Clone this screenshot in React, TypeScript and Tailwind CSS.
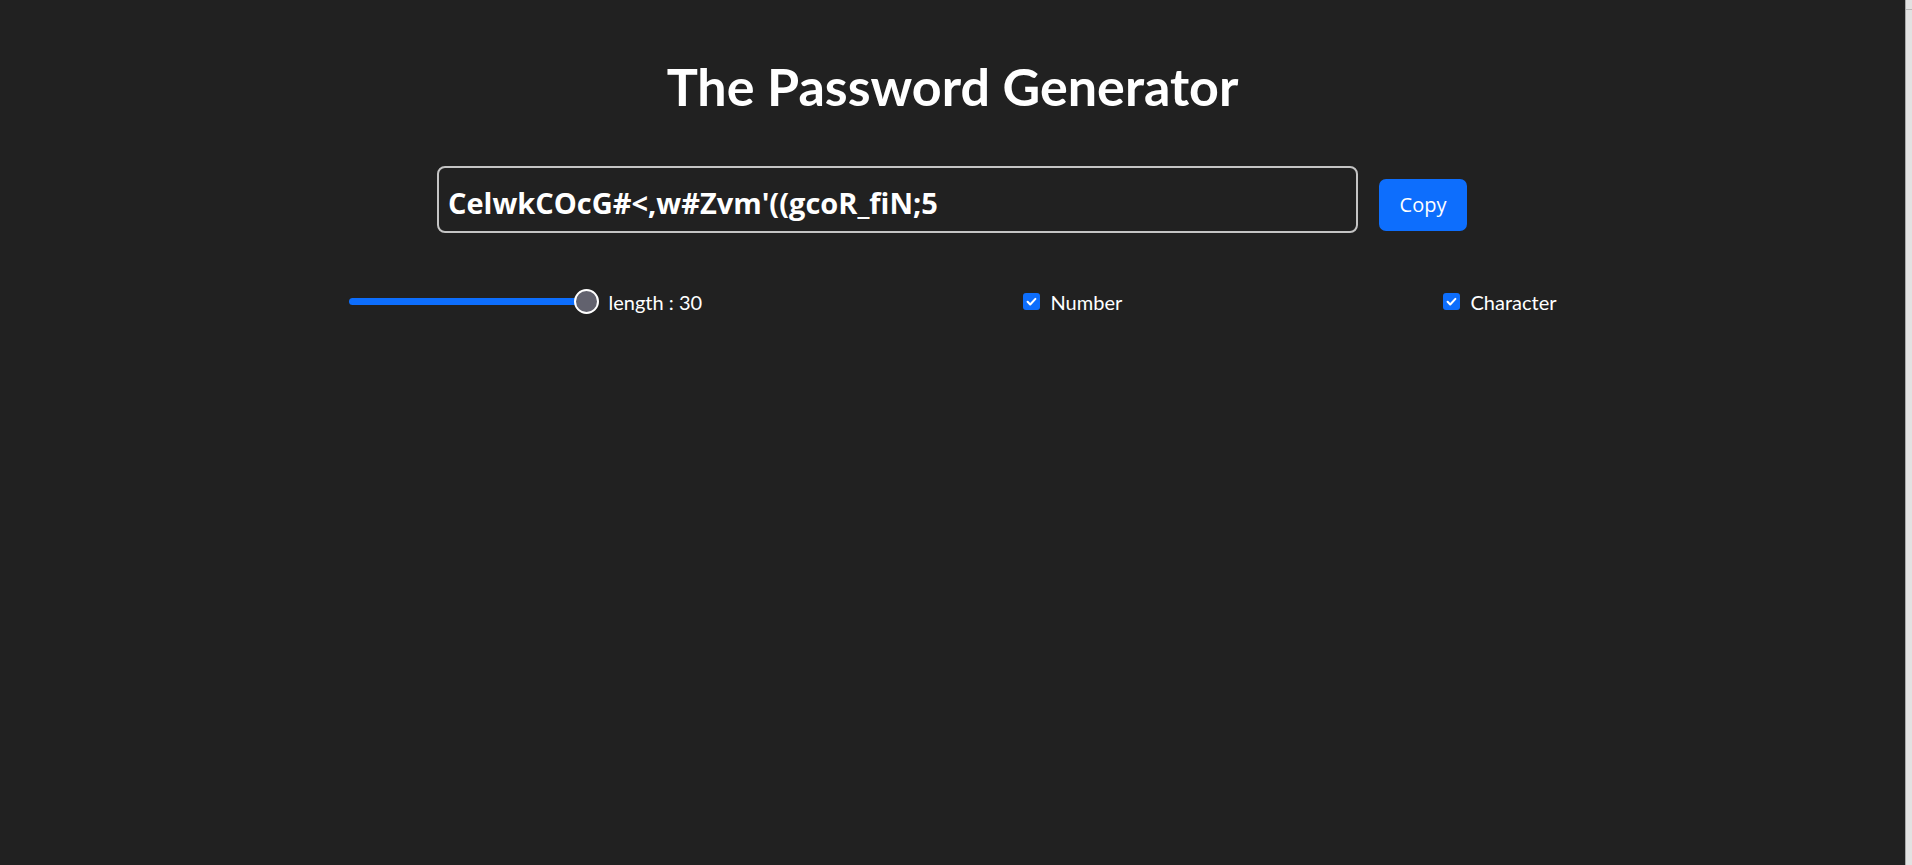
import React from "react";

const openSans = { fontFamily: '"Open Sans", "Noto Sans", "Liberation Sans", sans-serif' };
const lato = { fontFamily: 'Lato, "Open Sans", "Liberation Sans", sans-serif' };

function Check() {
  return (
    <span className="flex h-[17px] w-[17px] shrink-0 items-center justify-center rounded-[3px] bg-[#0d6efd]">
      <svg width="13" height="13" viewBox="0 0 20 20" fill="none">
        <path d="M4 10.5l4 4 8-8.5" stroke="#fff" strokeWidth="3.2" strokeLinecap="round" strokeLinejoin="round" />
      </svg>
    </span>
  );
}

export default function App() {
  return (
    <div className="flex h-screen w-full overflow-hidden bg-[#212121]" style={openSans}>
      <main className="flex flex-1 flex-col items-center">
        <h1 className="pt-[60px] text-[52px] font-bold leading-none text-white" style={lato}>
          The Password Generator
        </h1>

        <div className="mt-[54px] flex items-start gap-[21px] pr-[1px]">
          <input
            readOnly
            value="CelwkCOcG#<,w#Zvm'((gcoR_fiN;5"
            className="h-[67px] w-[921px] rounded-[8px] border-2 border-[#c4c4c4] bg-transparent px-[9px] pt-[5px] text-[29px] font-bold text-white outline-none"
          />
          <button className="mt-[13px] flex h-[52px] w-[88px] items-center justify-center rounded-[7px] bg-[#0d6efd] text-[20px] text-white">
            Copy
          </button>
        </div>

        <div className="mt-[56px] flex h-[25px] items-center" style={lato}>
          <div className="flex w-[674px] shrink-0 items-center">
            <div className="flex items-center">
              <div className="h-[7px] w-[231px] rounded-full bg-[#0d6efd]" />
              <div className="-ml-[6px] h-[25px] w-[25px] rounded-full border-2 border-white bg-[#62626e]" />
            </div>
            <span className="ml-[10px] whitespace-nowrap text-[20px] text-white">length : 30</span>
          </div>
          <label className="flex w-[420px] shrink-0 items-center gap-[11px] text-[20px] text-white">
            <Check />
            Number
          </label>
          <label className="flex w-[114px] shrink-0 items-center gap-[11px] whitespace-nowrap text-[20px] text-white">
            <Check />
            Character
          </label>
        </div>
      </main>
      <aside className="w-[7px] border-l border-[#a8a8a8] bg-[#e2e2e2]">
        <div className="mt-[9px] h-px bg-[#b8b8b8]" />
      </aside>
    </div>
  );
}
